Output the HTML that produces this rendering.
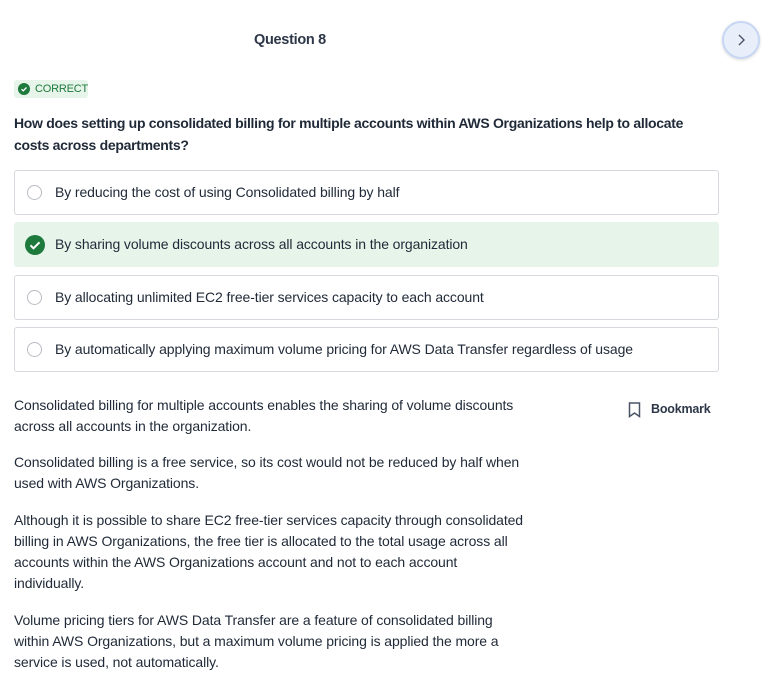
<!DOCTYPE html>
<html><head><meta charset="utf-8"><style>
*{box-sizing:border-box;margin:0;padding:0}
body{width:774px;height:684px;background:#fff;font-family:"Liberation Sans",sans-serif;color:#1f2937;position:relative;overflow:hidden;font-size:14px;letter-spacing:-0.1px}
.abs{position:absolute}
.title{left:254px;top:32px;font-size:14.5px;font-weight:bold;color:#2d3748;letter-spacing:-0.3px}
.next{left:722px;top:21px;width:38px;height:38px;border-radius:50%;background:#e8effb;border:2px solid #c7d7f3;box-shadow:0 1px 3px rgba(0,0,0,.15)}
.badge{left:14px;top:80px;width:74px;height:18px;background:#e6f4ea;border-radius:3px;font-size:11px;color:#1e7a3c;letter-spacing:-0.2px}
.q{left:14px;top:112px;width:700px;font-weight:bold;font-size:14px;line-height:22px;color:#1f2937;letter-spacing:-0.3px}
.opt{left:14px;width:705px;height:45px;border:1px solid #d5d8dc;border-radius:3px}
.opt .r{position:absolute;left:12px;top:14px;width:15px;height:15px;border:1px solid #b8bcc2;border-radius:50%}
.opt span{position:absolute;left:40px;top:13px;color:#1f2937}
.sel{background:#e6f4ea;border-color:#e6f4ea}
.exp{left:14px;width:600px;line-height:21px;color:#1f2937;white-space:nowrap}
</style></head><body>
<div class="abs title">Question 8</div>
<div class="abs next"><svg width="34" height="34" viewBox="0 0 34 34"><path d="M15 12l5 5-5 5" fill="none" stroke="#4a5568" stroke-width="1.4"/></svg></div>
<div class="abs badge"><svg class="abs" style="left:4px;top:3px" width="12" height="12" viewBox="0 0 12 12"><circle cx="6" cy="6" r="6" fill="#1e7a3c"/><path d="M3.5 6.2l1.7 1.6 3.3-3.3" fill="none" stroke="#fff" stroke-width="1.3"/></svg><span class="abs" style="left:21px;top:3px">CORRECT</span></div>
<div class="abs q">How does setting up consolidated billing for multiple accounts within AWS Organizations help to allocate costs across departments?</div>
<div class="abs opt" style="top:170px"><div class="r"></div><span>By reducing the cost of using Consolidated billing by half</span></div>
<div class="abs opt sel" style="top:222px"><svg class="abs" style="left:10px;top:12px" width="20" height="20" viewBox="0 0 20 20"><circle cx="10" cy="10" r="10" fill="#1e7a3c"/><path d="M5.5 10.3l3 3 6-6" fill="none" stroke="#fff" stroke-width="2"/></svg><span>By sharing volume discounts across all accounts in the organization</span></div>
<div class="abs opt" style="top:275px"><div class="r"></div><span>By allocating unlimited EC2 free-tier services capacity to each account</span></div>
<div class="abs opt" style="top:327px"><div class="r"></div><span>By automatically applying maximum volume pricing for AWS Data Transfer regardless of usage</span></div>
<svg class="abs" style="left:628px;top:402px" width="13" height="16" viewBox="0 0 13 16"><path d="M1.5 1h10v13.5l-5-3.5-5 3.5z" fill="none" stroke="#4a5568" stroke-width="1.5"/></svg>
<div class="abs" style="left:651px;top:402px;font-weight:bold;font-size:12.5px;color:#2d3748;letter-spacing:-0.2px">Bookmark</div>
<div class="abs exp" style="top:395px">Consolidated billing for multiple accounts enables the sharing of volume discounts<br>across all accounts in the organization.</div>
<div class="abs exp" style="top:452px">Consolidated billing is a free service, so its cost would not be reduced by half when<br>used with AWS Organizations.</div>
<div class="abs exp" style="top:510px">Although it is possible to share EC2 free-tier services capacity through consolidated<br>billing in AWS Organizations, the free tier is allocated to the total usage across all<br>accounts within the AWS Organizations account and not to each account<br>individually.</div>
<div class="abs exp" style="top:610px">Volume pricing tiers for AWS Data Transfer are a feature of consolidated billing<br>within AWS Organizations, but a maximum volume pricing is applied the more a<br>service is used, not automatically.</div>
</body></html>
